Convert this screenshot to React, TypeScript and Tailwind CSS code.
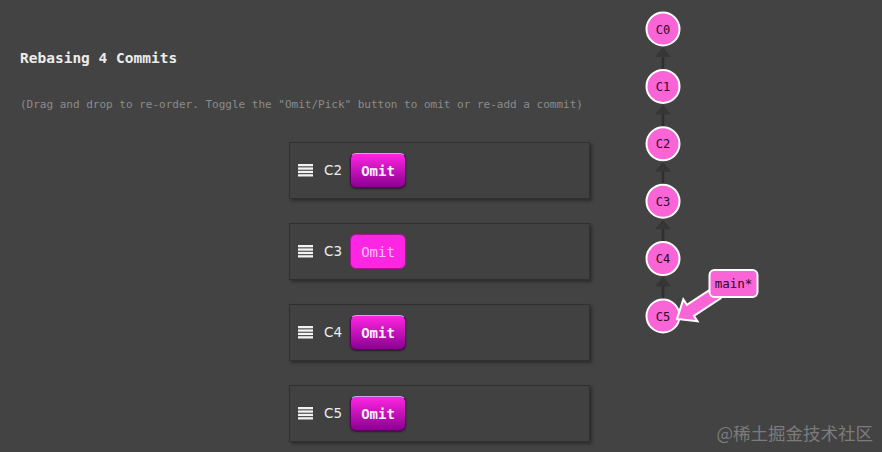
const commits = [
  { id: "C2", hover: false },
  { id: "C3", hover: true },
  { id: "C4", hover: false },
  { id: "C5", hover: false },
];

const nodes = ["C0", "C1", "C2", "C3", "C4", "C5"];
const nodeY = (i: number) => 29 + i * 57.4;

function Grip() {
  return (
    <svg width="15" height="13" viewBox="0 0 15 13" className="shrink-0">
      {[0, 1, 2, 3].map((i) => (
        <rect key={i} x="0" y={i * 3.4} width="15" height="2.3" fill="#f2f2f2" />
      ))}
    </svg>
  );
}

function CommitRow({ id, hover }: { id: string; hover: boolean }) {
  return (
    <div className="flex h-[57px] w-[301px] items-center border border-[#303030] bg-[#414141] pl-[8px] shadow-[2px_2px_3px_rgba(0,0,0,0.35)]">
      <Grip />
      <span className="ml-[11px] w-[26px] font-['DejaVu_Sans',sans-serif] text-[13.5px] text-[#ededed]">{id}</span>
      {hover ? (
        <button className="h-[35px] w-[56px] rounded-[6px] border border-[#b0109f] bg-[#ff26e3] pt-[2px] font-['DejaVu_Sans_Mono',monospace] text-[14px] text-[#ffc2f4]">
          Omit
        </button>
      ) : (
        <button className="h-[35px] w-[56px] rounded-[6px] border border-[#5c0060] border-t-[#c9a5ff] bg-gradient-to-b from-[#ff24e2] to-[#8c0092] pt-[2px] font-['DejaVu_Sans_Mono',monospace] text-[14px] font-bold text-[#fff0fc] shadow-[0_1px_2px_rgba(0,0,0,0.5)]">
          Omit
        </button>
      )}
    </div>
  );
}

function Graph() {
  return (
    <svg width="262" height="452" className="absolute left-[620px] top-0">
      {nodes.slice(1).map((_, k) => {
        const top = nodeY(k) + 17;
        const bottom = nodeY(k + 1) - 17;
        return (
          <g key={k}>
            <line x1="43" y1={top + 6} x2="43" y2={bottom} stroke="#2f2f2f" strokeWidth="2.5" />
            <polygon points={`43,${top + 1} 35,${top + 11} 51,${top + 11}`} fill="#363636" />
          </g>
        );
      })}
      {nodes.map((n, i) => (
        <g key={n}>
          <circle cx="43" cy={nodeY(i)} r="16.5" fill="#f964d6" stroke="#ffffff" strokeWidth="2" />
          <text
            x="43"
            y={nodeY(i) + 4.5}
            textAnchor="middle"
            fontFamily="'DejaVu Sans Mono', monospace"
            fontSize="12"
            fill="#2a0a25"
          >
            {n}
          </text>
        </g>
      ))}
      <polygon
        points="100.5,298.5 73.9,315.8 77.5,321.2 57,319 63.3,299.4 66.9,304.8 93.5,287.5"
        fill="#f964d6"
        stroke="#ffffff"
        strokeWidth="2"
        strokeLinejoin="miter"
      />
      <rect x="89.5" y="270" width="48" height="27" rx="5" fill="#f964d6" stroke="#ffffff" strokeWidth="2" />
      <text
        x="113.5"
        y="288"
        textAnchor="middle"
        fontFamily="'DejaVu Sans Mono', monospace"
        fontSize="12.5"
        fill="#2a0a25"
      >
        main*
      </text>
    </svg>
  );
}

export default function App() {
  return (
    <div className="relative h-[452px] w-[882px] overflow-hidden bg-[#434343]">
      <div className="flex flex-col pl-[20px]">
        <h1 className="mt-[48px] font-['DejaVu_Sans_Mono',monospace] text-[14.5px] font-bold leading-[20px] text-[#ececec]">
          Rebasing 4 Commits
        </h1>
        <p className="mt-[29px] font-['DejaVu_Sans_Mono',monospace] text-[11px] leading-[16px] text-[#8c8c8c]">
          (Drag and drop to re-order. Toggle the "Omit/Pick" button to omit or re-add a commit)
        </p>
        <div className="ml-[269px] mt-[29px] flex flex-col gap-[24px]">
          {commits.map((c) => (
            <CommitRow key={c.id} id={c.id} hover={c.hover} />
          ))}
        </div>
      </div>
      <Graph />
      <div className="absolute bottom-[8px] right-[9px] font-['Noto_Sans_CJK_SC',sans-serif] text-[17.5px] leading-[22px] text-[#8a8a8a] opacity-80">
        @稀土掘金技术社区
      </div>
    </div>
  );
}
